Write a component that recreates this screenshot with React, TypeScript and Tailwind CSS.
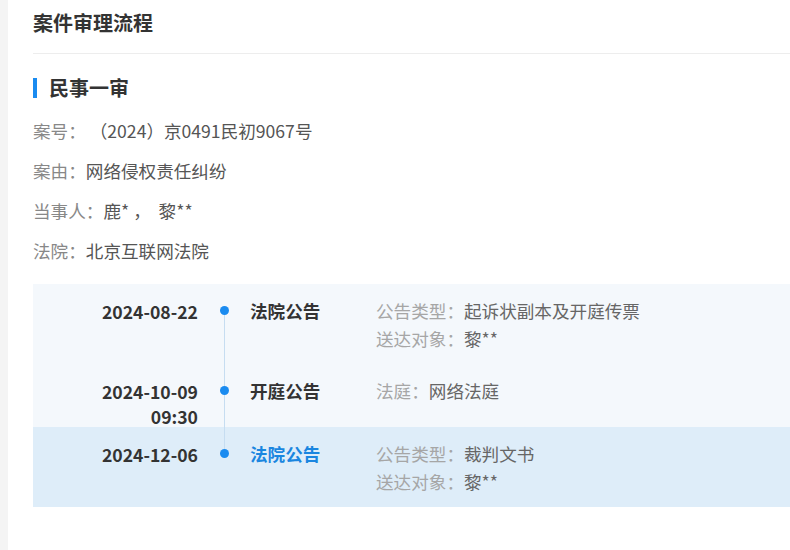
import React from 'react';

interface TimelineItem {
  date: string;
  time?: string;
  title: string;
  details: { label: string; value: string }[];
  height: string;
  active?: boolean;
}

const items: TimelineItem[] = [
  {
    date: '2024-08-22',
    title: '法院公告',
    details: [
      { label: '公告类型：', value: '起诉状副本及开庭传票' },
      { label: '送达对象：', value: '黎**' },
    ],
    height: 'h-[80px]',
  },
  {
    date: '2024-10-09',
    time: '09:30',
    title: '开庭公告',
    details: [{ label: '法庭：', value: '网络法庭' }],
    height: 'h-[63px]',
  },
  {
    date: '2024-12-06',
    title: '法院公告',
    details: [
      { label: '公告类型：', value: '裁判文书' },
      { label: '送达对象：', value: '黎**' },
    ],
    height: 'h-[80px]',
    active: true,
  },
];

const caseInfo = [
  { label: '案号：', value: ' （2024）京0491民初9067号' },
  { label: '案由：', value: '网络侵权责任纠纷' },
  { label: '当事人：', value: '鹿* ，  黎**' },
  { label: '法院：', value: '北京互联网法院' },
];

const TimelineRow: React.FC<{ item: TimelineItem; first: boolean; last: boolean }> = ({ item, first, last }) => (
  <div className={`flex ${item.height} ${item.active ? 'bg-[#deedf9]' : ''}`}>
    <div className="w-[165px] shrink-0 pt-[15px] text-right text-[17.6px] font-bold leading-[25px] text-[#333]">
      <div>{item.date}</div>
      {item.time && <div>{item.time}</div>}
    </div>
    <div className="flex w-[52px] shrink-0 flex-col items-center">
      <div className={`h-[22px] w-px ${first ? '' : 'bg-[#c6ddf1]'}`} />
      <div className="h-[9px] w-[9px] shrink-0 rounded-full bg-[#1a8bf0]" />
      <div className={`w-px flex-1 ${last ? '' : 'bg-[#c6ddf1]'}`} />
    </div>
    <div
      className={`w-[126px] shrink-0 pt-[13px] text-[17.6px] font-bold leading-[28px] ${
        item.active ? 'text-[#1a86e0]' : 'text-[#333]'
      }`}
    >
      {item.title}
    </div>
    <div className="pt-[13px] text-[17.6px] leading-[28px]">
      {item.details.map((d) => (
        <div key={d.label}>
          <span className="text-[#a6a6a6]">{d.label}</span>
          <span className="text-[#666]">{d.value}</span>
        </div>
      ))}
    </div>
  </div>
);

export default function App() {
  return (
    <div
      className="flex min-h-[550px] bg-[#f4f4f4]"
      style={{ fontFamily: '"Noto Sans CJK SC", "Noto Sans", sans-serif' }}
    >
      <div className="ml-[8px] flex-1 bg-white pl-[25px]">
        <div className="border-b border-[#ededed] pt-[10px] pb-[17px] text-[20px] font-bold leading-[26px] text-[#333]">
          案件审理流程
        </div>

        <div className="mt-[20px] flex items-center">
          <div className="h-[20px] w-[4px] bg-[#1a8bf0]" />
          <h2 className="ml-[12px] text-[20px] font-bold leading-[28px] text-[#333]">民事一审</h2>
        </div>

        <div className="mt-[9px] text-[17.6px] leading-[40px]">
          {caseInfo.map((row) => (
            <div key={row.label} className="whitespace-pre">
              <span className="text-[#888]">{row.label}</span>
              <span className="text-[#555]">{row.value}</span>
            </div>
          ))}
        </div>

        <div className="mt-[13px] bg-[#f4f8fc]">
          {items.map((item, i) => (
            <TimelineRow key={i} item={item} first={i === 0} last={i === items.length - 1} />
          ))}
        </div>
      </div>
    </div>
  );
}
